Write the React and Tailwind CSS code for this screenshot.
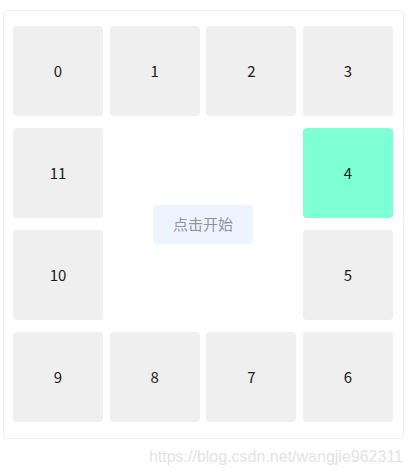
import { useState } from 'react'

// cells around the edge of the 4x4 board, in grid order
const CELLS = [
  { n: 0, r: 1, c: 1 },
  { n: 1, r: 1, c: 2 },
  { n: 2, r: 1, c: 3 },
  { n: 3, r: 1, c: 4 },
  { n: 11, r: 2, c: 1 },
  { n: 4, r: 2, c: 4 },
  { n: 10, r: 3, c: 1 },
  { n: 5, r: 3, c: 4 },
  { n: 9, r: 4, c: 1 },
  { n: 8, r: 4, c: 2 },
  { n: 7, r: 4, c: 3 },
  { n: 6, r: 4, c: 4 },
]

const ROW = ['row-start-1', 'row-start-2', 'row-start-3', 'row-start-4']
const COL = ['col-start-1', 'col-start-2', 'col-start-3', 'col-start-4']

export default function App() {
  const [active] = useState(4)

  return (
    <div className="w-[413px] h-[472px] bg-white font-['Noto_Sans_CJK_SC',sans-serif]">
      <div className="ml-[3px] pt-[10px]">
        <div className="w-[401px] border border-[#ebeef5] rounded-[4px] pt-[15px] pb-[16px] pl-[9px] pr-[10px]">
          <div className="grid grid-cols-[repeat(4,90px)] grid-rows-[repeat(4,90px)] justify-between gap-y-[12px]">
            {CELLS.map((cell) => (
              <div
                key={cell.n}
                className={`${ROW[cell.r - 1]} ${COL[cell.c - 1]} flex items-center justify-center rounded-[4px] text-[15px] text-[#1a1a1a] ${
                  cell.n === active ? 'bg-[#7fffd4]' : 'bg-[#efefef]'
                }`}
              >
                {cell.n}
              </div>
            ))}
            <div className="row-start-2 row-span-2 col-start-2 col-span-2 flex items-center justify-center">
              <button className="w-[100px] h-[39px] rounded-[4px] bg-[#ecf5ff] text-[15px] text-[#909399]">
                点击开始
              </button>
            </div>
          </div>
        </div>
      </div>
      <div className="pt-[6px] pr-[10px] text-right text-[16px] text-[#e3e3e3] font-['Liberation_Sans',sans-serif]">
        https://blog.csdn.net/wangjie962311
      </div>
    </div>
  )
}
